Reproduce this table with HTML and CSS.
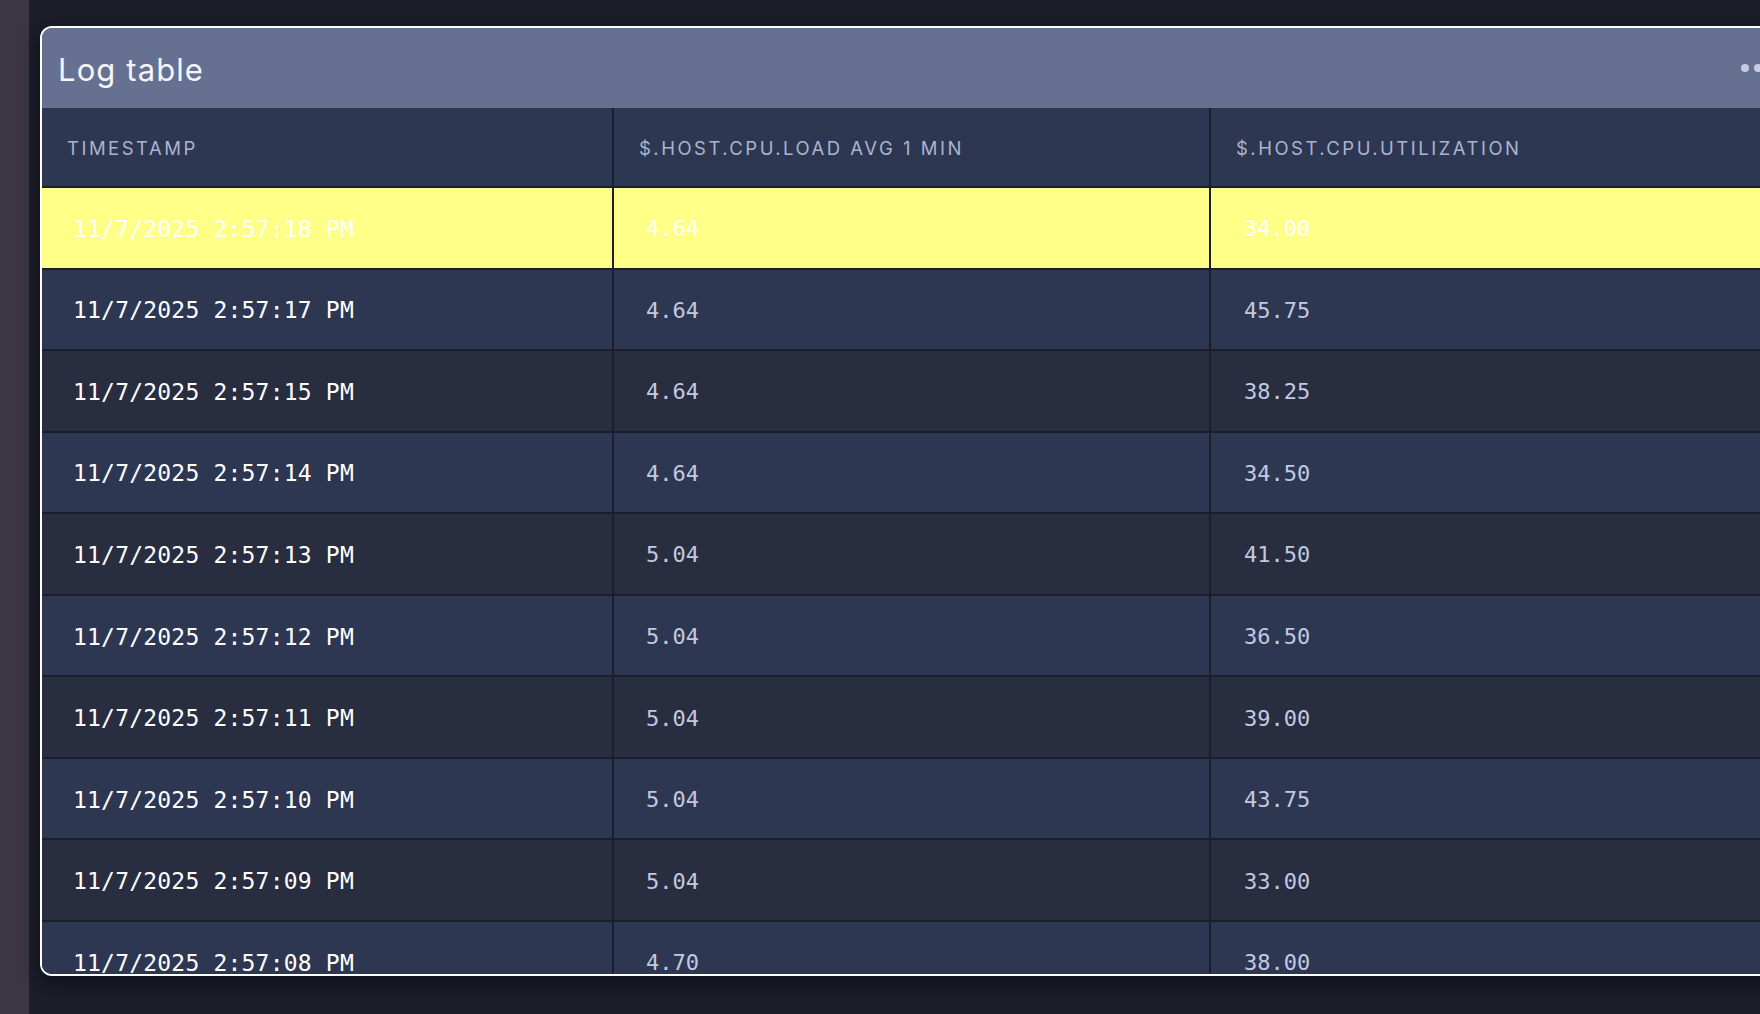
FILE: index.html
```html
<!DOCTYPE html>
<html lang="en">
<head>
<meta charset="utf-8">
<title>Log table</title>
<link rel="stylesheet" href="styles.css">
</head>
<body>
<div class="app">
  <aside class="rail"></aside>
  <main class="canvas">
    <section class="card">
      <header class="card-head">
        <h1 class="card-title">Log table</h1>
        <div class="menu" aria-label="More">
          <span class="dot"></span><span class="dot"></span><span class="dot"></span>
        </div>
      </header>
      <div class="table">
        <div class="row head">
          <div class="cell c1">TIMESTAMP</div>
          <div class="cell c2">$.HOST.CPU.LOAD AVG 1 MIN</div>
          <div class="cell c3">$.HOST.CPU.UTILIZATION</div>
        </div>
        <div class="row hl">
          <div class="cell c1 ts">11/7/2025 2:57:18 PM</div>
          <div class="cell c2 num">4.64</div>
          <div class="cell c3 num">34.00</div>
        </div>
        <div class="row odd">
          <div class="cell c1 ts">11/7/2025 2:57:17 PM</div>
          <div class="cell c2 num">4.64</div>
          <div class="cell c3 num">45.75</div>
        </div>
        <div class="row even">
          <div class="cell c1 ts">11/7/2025 2:57:15 PM</div>
          <div class="cell c2 num">4.64</div>
          <div class="cell c3 num">38.25</div>
        </div>
        <div class="row odd">
          <div class="cell c1 ts">11/7/2025 2:57:14 PM</div>
          <div class="cell c2 num">4.64</div>
          <div class="cell c3 num">34.50</div>
        </div>
        <div class="row even">
          <div class="cell c1 ts">11/7/2025 2:57:13 PM</div>
          <div class="cell c2 num">5.04</div>
          <div class="cell c3 num">41.50</div>
        </div>
        <div class="row odd">
          <div class="cell c1 ts">11/7/2025 2:57:12 PM</div>
          <div class="cell c2 num">5.04</div>
          <div class="cell c3 num">36.50</div>
        </div>
        <div class="row even">
          <div class="cell c1 ts">11/7/2025 2:57:11 PM</div>
          <div class="cell c2 num">5.04</div>
          <div class="cell c3 num">39.00</div>
        </div>
        <div class="row odd">
          <div class="cell c1 ts">11/7/2025 2:57:10 PM</div>
          <div class="cell c2 num">5.04</div>
          <div class="cell c3 num">43.75</div>
        </div>
        <div class="row even">
          <div class="cell c1 ts">11/7/2025 2:57:09 PM</div>
          <div class="cell c2 num">5.04</div>
          <div class="cell c3 num">33.00</div>
        </div>
        <div class="row odd">
          <div class="cell c1 ts">11/7/2025 2:57:08 PM</div>
          <div class="cell c2 num">4.70</div>
          <div class="cell c3 num">38.00</div>
        </div>
      </div>
    </section>
  </main>
</div>
</body>
</html>
```

FILE: styles.css
```css
* { box-sizing: border-box; }

html, body {
  margin: 0;
  padding: 0;
  width: 1760px;
  height: 1014px;
  overflow: hidden;
  background: #1c1e2a;
  font-family: Inter, "Noto Sans", sans-serif;
}

.app {
  display: flex;
  height: 1014px;
}

.rail {
  flex: 0 0 29px;
  background: #3d3644;
}

.canvas {
  flex: 1 1 auto;
  min-width: 0;
  padding: 26px 0 0 11px;
  background: #1c1e2a;
}

.card {
  width: 1760px;
  height: 950px;
  border: 2px solid #ffffff;
  border-radius: 12px;
  overflow: hidden;
  background: #2e3752;
  box-shadow: 0 6px 22px rgba(0, 0, 0, 0.55);
}

.card-head {
  height: 80px;
  background: #667091;
  display: flex;
  align-items: center;
  padding: 0 24px 0 16px;
}

.card-title {
  margin: 0;
  font-size: 31px;
  font-weight: 400;
  letter-spacing: 1.1px;
  color: #f4f5fa;
  padding-top: 2px;
}

.menu {
  margin-left: auto;
  display: flex;
  gap: 4.3px;
}

.dot {
  width: 8px;
  height: 8px;
  border-radius: 50%;
  background: #c6cce6;
}

.table {
  display: flex;
  flex-direction: column;
}

.row {
  display: grid;
  grid-template-columns: 570px 595px 1fr;
  column-gap: 2px;
  background: #1b1e2b;
  border-bottom: 2px solid #1b1e2b;
  height: 81.56px;
  flex: 0 0 auto;
}

.row.head {
  height: 80px;
}

.cell {
  display: flex;
  align-items: center;
  white-space: nowrap;
  overflow: hidden;
}

.head .cell {
  background: #2e3752;
  color: #aab3d0;
  font-size: 18.5px;
  letter-spacing: 2.5px;
  font-weight: 400;
  padding-left: 25px;
  padding-top: 2px;
}

.odd .cell { background: #2e3752; }
.even .cell { background: #292d40; }
.hl .cell { background: #ffff88; }

.ts {
  font-family: "DejaVu Sans Mono", "Liberation Mono", monospace;
  font-size: 23px;
  letter-spacing: 0.2px;
  color: #ffffff;
  padding-left: 31px;
  padding-top: 2px;
}

.num {
  font-family: "DejaVu Sans Mono", "Liberation Mono", monospace;
  font-size: 22px;
  color: #c2c9e0;
  padding-top: 2px;
}

.c2.num { padding-left: 32px; }
.c3.num { padding-left: 33px; }

.hl .ts, .hl .num { color: #ffffff; }
```
